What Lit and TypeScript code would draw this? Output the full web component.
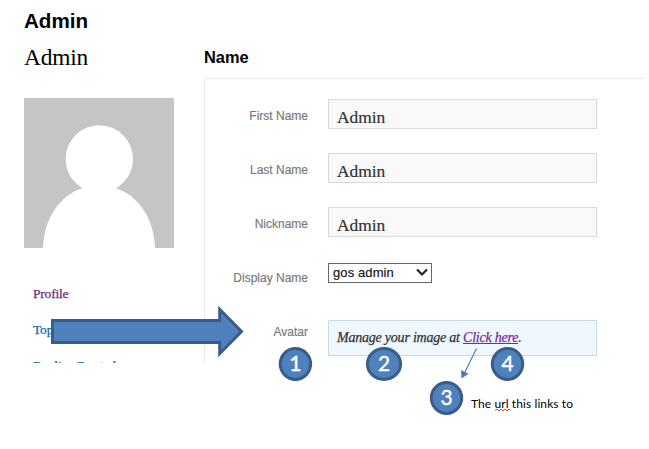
import { LitElement, html, css, svg } from "lit";
import { customElement } from "lit/decorators.js";

const badges = [
  { n: 1, x: 295.4, y: 364, rx: 15.2 },
  { n: 2, x: 384, y: 364, rx: 16.6 },
  { n: 3, x: 446.5, y: 398, rx: 15.2 },
  { n: 4, x: 507.5, y: 364, rx: 15.2 },
];

@customElement("app-root")
export class AppRoot extends LitElement {
  static styles = css`
    :host {
      display: block;
      position: relative;
      width: 649px;
      height: 449px;
      overflow: hidden;
      background: #fff;
      font-family: "Liberation Sans", Arial, sans-serif;
      color: #000;
    }
    .page {
      box-sizing: border-box;
      height: 363px;
      padding: 9px 0 0 24px;
      overflow: hidden;
    }
    h1 {
      margin: 0;
      font-size: 20.6px;
      line-height: 24px;
    }
    .columns {
      display: grid;
      grid-template-columns: 180px 440px;
    }
    .user {
      margin: 12px 0 0;
      font: 23.4px/24px "Liberation Serif", Georgia, serif;
      letter-spacing: -0.2px;
    }
    .avatar {
      display: block;
      margin-top: 29px;
    }
    nav {
      display: flex;
      flex-direction: column;
      gap: 16px;
      margin: 36px 0 0 9px;
      font: 13.5px/20px "Liberation Serif", Georgia, serif;
      letter-spacing: -0.2px;
      color: #0f68b0;
      -webkit-text-stroke: 0.25px currentColor;
    }
    .current {
      color: #6b2c85;
    }
    h2 {
      margin: 14px 0 0;
      font-size: 16.4px;
      line-height: 20px;
    }
    .form {
      box-sizing: border-box;
      height: 300px;
      margin-top: 11px;
      padding: 20px 0 0;
      border-top: 1px solid #eaeaea;
      border-left: 1px solid #eaeaea;
    }
    .row {
      display: grid;
      grid-template-columns: 103px 269px;
      column-gap: 20px;
      height: 54px;
    }
    .label {
      padding-top: 7px;
      text-align: right;
      font-size: 12px;
      line-height: 20px;
      color: #777;
      -webkit-text-stroke: 0.15px #777;
    }
    .field {
      box-sizing: border-box;
      height: 30px;
      padding: 5px 8px 0;
      border: 1px solid #d8d8d8;
      background: #f9f9f9;
      font: 17.4px/25px "Liberation Serif", Georgia, serif;
      letter-spacing: -0.05px;
      color: #333;
      -webkit-text-stroke: 0.2px #333;
    }
    .select {
      display: flex;
      justify-content: space-between;
      align-items: center;
      box-sizing: border-box;
      width: 104px;
      height: 20px;
      margin-top: 2px;
      padding: 0 3px 0 4px;
      border: 1px solid #666;
      background: #fff;
      font-size: 13px;
      line-height: 18px;
      letter-spacing: 0.1px;
      color: #111;
      -webkit-text-stroke: 0.15px #111;
    }
    .chevron {
      margin-bottom: 2px;
    }
    .notice {
      box-sizing: border-box;
      height: 36px;
      margin-top: 5px;
      padding: 0 8px;
      border: 1px solid #c6dbea;
      background: #f0f8ff;
      font: italic 14px/33px "Liberation Serif", Georgia, serif;
      letter-spacing: -0.22px;
      white-space: nowrap;
      color: #333;
      -webkit-text-stroke: 0.25px currentColor;
    }
    .link {
      color: #7a2a94;
      text-decoration: underline;
    }
    .marks {
      position: absolute;
      left: 0;
      top: 0;
      font-family: Lato, Carlito, sans-serif;
    }
    .shape {
      fill: #4f81bd;
      stroke: #385d8a;
      stroke-width: 3;
    }
    .num {
      fill: #fff;
      stroke: #fff;
      stroke-width: 0.4;
      font-size: 21px;
      text-anchor: middle;
    }
    .note {
      fill: #000;
      font-size: 12px;
    }
  `;

  private row(label: string, control: unknown) {
    return html`<div class="row"><span class="label">${label}</span>${control}</div>`;
  }

  render() {
    const field = html`<div class="field">Admin</div>`;
    return html`
      <div class="page">
        <h1>Admin</h1>
        <div class="columns">
          <aside>
            <p class="user">Admin</p>
            <svg class="avatar" width="150" height="150" viewBox="0 0 150 150">
              <rect width="150" height="150" fill="#c5c5c5" />
              <circle cx="75.3" cy="61" r="33.7" fill="#fff" />
              <path d="M19 150C20 120 36 97 59 90H91C114 97 130 120 131 150Z" fill="#fff" />
            </svg>
            <nav>
              <span class="current">Profile</span>
              <span>Topics Started</span>
              <span>Replies Created</span>
            </nav>
          </aside>
          <main>
            <h2>Name</h2>
            <div class="form">
              ${this.row("First Name", field)}
              ${this.row("Last Name", field)}
              ${this.row("Nickname", field)}
              ${this.row("Display Name", html`<div class="select">gos admin
                <svg class="chevron" width="12" height="9" viewBox="0 0 12 9">
                  <path d="M1 1.5L6 6.5L11 1.5" fill="none" stroke="#222" stroke-width="2.2" />
                </svg></div>`)}
              ${this.row("Avatar", html`<div class="notice">Manage your image at <span class="link">Click here</span>.</div>`)}
            </div>
          </main>
        </div>
      </div>
      <svg class="marks" width="649" height="449" viewBox="0 0 649 449">
        <path class="shape" d="M52.5 320.5H219.7V309.5L241.5 331.5L219.7 353.5V342.5H52.5Z" />
        <path d="M476.5 348.5L465 372" stroke="#4a7ebb" stroke-width="1.2" />
        <path d="M461.5 378.5L461 370L468.5 373.7Z" fill="#4a7ebb" />
        ${badges.map((b) => svg`
          <ellipse class="shape" cx=${b.x} cy=${b.y} rx=${b.rx} ry="15.4" />
          <text class="num" x=${b.x} y=${b.y + 7}>${b.n}</text>`)}
        <text class="note" x="471" y="408" textLength="102">The url this links to</text>
        <path d="M495 410.5l2 -1.5l2 2l2 -2l2 2l2 -2l2 2l2 -2l1.5 1.5" fill="none" stroke="#e03030" stroke-width="0.9" />
      </svg>
    `;
  }
}
